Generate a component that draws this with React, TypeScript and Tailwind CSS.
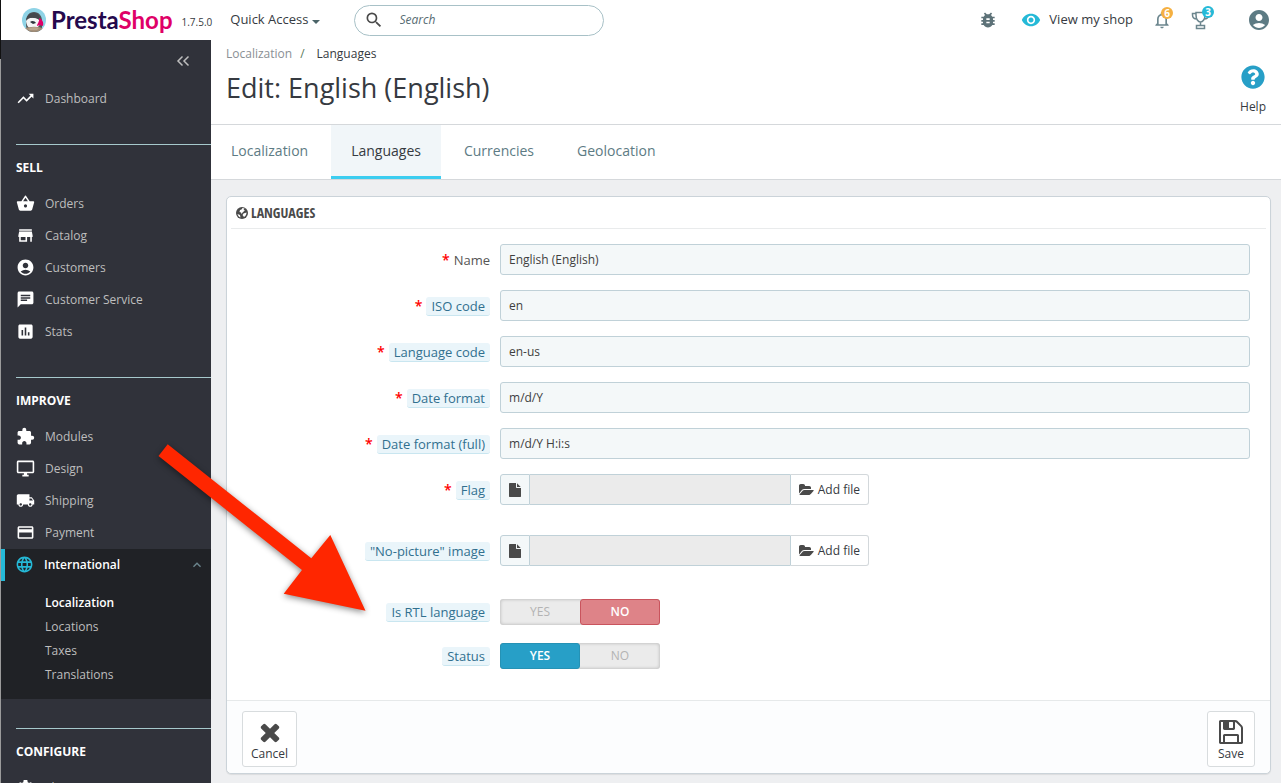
import type { ComponentType, ReactNode } from 'react';
import {
  MdTrendingUp, MdShoppingBasket, MdStore, MdAccountCircle, MdChat, MdAssessment, MdExtension,
  MdLocalShipping, MdCreditCard, MdLanguage, MdSettings, MdBugReport, MdRemoveRedEye,
  MdSearch, MdNotificationsNone, MdKeyboardArrowUp,
} from 'react-icons/md';
import { FaQuestionCircle } from 'react-icons/fa';

function Glyph({ d, box = '0 0 1792 1792', className }: { d: string; box?: string; className?: string }) {
  return (
    <svg viewBox={box} fill="currentColor" className={className} aria-hidden="true">
      <path d={d} />
    </svg>
  );
}

const FILE = 'M1152 512v-472q22 14 36 28l408 408q14 14 28 36h-472zm-128 32q0 40 28 68t68 28h544v1056q0 40-28 68t-68 28h-1344q-40 0-68-28t-28-68v-1600q0-40 28-68t68-28h800v544z';
const FOLDER = 'M1879 952q0 31-31 66l-336 396q-43 51-120.5 86.5t-143.5 35.5h-1088q-34 0-60.5-13t-26.5-43q0-31 31-66l336-396q43-51 120.5-86.5t143.5-35.5h1088q34 0 60.5 13t26.5 43zm-343-344v160h-832q-94 0-197 47.5t-164 119.5l-337 396-5 6q0-4-.5-12.5t-.5-12.5v-960q0-92 66-158t158-66h320q92 0 158 66t66 158v32h544q92 0 158 66t66 158z';
const TIMES = 'M1490 1322q0 40-28 68l-136 136q-28 28-68 28t-68-28l-294-294-294 294q-28 28-68 28t-68-28l-136-136q-28-28-28-68t28-68l294-294-294-294q-28-28-28-68t28-68l136-136q28-28 68-28t68 28l294 294 294-294q28-28 68-28t68 28l136 136q28 28 28 68t-28 68l-294 294 294 294q28 28 28 68z';
const FLOPPY = 'M512 1536h768v-384h-768v384zm896 0h128v-896q0-14-10-38.5t-20-34.5l-281-281q-10-10-34-20t-39-10v416q0 40-28 68t-68 28h-576q-40 0-68-28t-28-68v-416h-128v1280h128v-416q0-40 28-68t68-28h832q40 0 68 28t28 68v416zm-384-928v-320q0-13-9.5-22.5t-22.5-9.5h-192q-13 0-22.5 9.5t-9.5 22.5v320q0 13 9.5 22.5t22.5 9.5h192q13 0 22.5-9.5t9.5-22.5zm640 32v928q0 40-28 68t-68 28h-1344q-40 0-68-28t-28-68v-1344q0-40 28-68t68-28h928q40 0 88 20t76 48l280 280q28 28 48 76t20 88z';
const DESKTOP = 'M21 2H3c-1.100 0-2 .9-2 2v12c0 1.100.9 2 2 2h7v2H8v2h8v-2h-2v-2h7c1.100 0 2-.9 2-2V4c0-1.100-.9-2-2-2zM21 16V4H3v12z';

function DesktopIcon({ className }: { className?: string }) {
  return (
    <svg viewBox="0 0 24 24" fill="currentColor" fillRule="evenodd" className={className} aria-hidden="true">
      <path d={DESKTOP} />
    </svg>
  );
}

function PuffinLogo() {
  return (
    <svg viewBox="0 0 24 24" className="size-6 shrink-0" aria-hidden="true">
      <defs>
        <clipPath id="disc"><circle cx="12" cy="12" r="12" /></clipPath>
      </defs>
      <g clipPath="url(#disc)">
        <rect width="24" height="24" fill="#8fd3e6" />
        <path d="M6 24c-2-3-2-7-2-10 0-6 3-10 8-10s8 4 8 9v11z" fill="#4f5256" />
        <path d="M4 13c2-3 5-4 8-3 4 0 6 2 6 5s-3 5-6 5c-4 1-7 0-8-7z" fill="#f4f5f5" />
        <path d="M4 12c3-3 9-3 14 0 0-4-2-7-6-7-5 0-7 3-8 7z" fill="#45484c" />
        <path d="M8 14c2-2 5-1 6 1l-3 1z" fill="#2f343c" />
        <path d="M17 10c3 1 5 4 4 8-2-1-4-1-6 0 0-2 3-5 2-8z" fill="#df0067" />
        <path d="M2 21c4-3 16-3 20 0v4H2z" fill="#a48f79" />
        <path d="M6 21c4-2 8-2 11-1l-2 2H8z" fill="#b9a58d" />
      </g>
    </svg>
  );
}

function TopBar() {
  return (
    <header className="flex h-10 shrink-0 items-center bg-white pl-[21px] text-[13px] text-[#363a41]">
      <a href="#home" className="flex items-center gap-[5px]">
        <PuffinLogo />
        <span className="font-['Lato',sans-serif] text-[24px] leading-6 font-bold text-[#25094d]">
          Presta<span className="text-[#df0067]">Shop</span>
        </span>
      </a>
      <span className="ml-[9px] pt-1 text-[10px]">1.7.5.0</span>
      <button type="button" className="ml-[18px] flex items-center gap-1">
        Quick Access
        <svg viewBox="0 0 8 4" className="mt-1 h-1 w-2" aria-hidden="true"><path d="M0 0h8L4 4z" fill="#4b6468" /></svg>
      </button>
      <label className="ml-[34px] flex h-[31px] w-[250px] items-center rounded-full border border-[#a8c1c7] pl-[9px]">
        <MdSearch className="size-5 shrink-0 text-[#4a4a4a]" />
        <input type="text" aria-label="Search" placeholder="Search" className="ml-[15px] w-full min-w-0 rounded-full bg-transparent text-[12px] italic outline-none placeholder:text-[#576c72]" />
      </label>
      <div className="ml-auto flex items-center pr-[10px] text-[#6c868e]">
        <button type="button" aria-label="Debug mode"><MdBugReport className="size-5 text-[#5d7278]" /></button>
        <a href="#shop" className="ml-[23px] flex items-center gap-2 text-[13px] text-[#363a41]">
          <MdRemoveRedEye className="size-5 text-[#25b9d7]" />
          View my shop
        </a>
        <button type="button" aria-label="Notifications" className="relative ml-[19px]">
          <MdNotificationsNone className="size-5" />
          <span className="absolute -top-[3px] left-[9px] flex size-3 items-center justify-center rounded-full bg-[#f5b041] text-[10px] leading-3 font-bold text-white">6</span>
        </button>
        <button type="button" aria-label="Achievements" className="relative ml-[19px]">
          <svg viewBox="0 0 20 20" className="size-5" fill="none" stroke="currentColor" strokeWidth="1.500" aria-hidden="true">
            <path d="M5 2.500h9V5c0 4-2 7-4.500 7S5 9 5 5zM5 3.500H1.500V5C1.500 8 3.500 9 6 9M14 3.500h3.500V5c0 3-2 4-4.500 4M9.500 12v3.500M5.500 15.500h8v3h-8z" />
          </svg>
          <span className="absolute -top-[4px] left-[11px] flex size-3 items-center justify-center rounded-full bg-[#25b9d7] text-[10px] leading-3 font-bold text-white">3</span>
        </button>
        <button type="button" aria-label="Account" className="ml-9"><MdAccountCircle className="size-6 text-[#5d7b84]" /></button>
      </div>
    </header>
  );
}

function NavItem({ icon: Icon, label }: { icon: ComponentType<{ className?: string }>; label: string }) {
  return (
    <a href={'#' + label} className="flex h-8 items-center gap-[10px] pl-[15px] text-[#bebebe]">
      <Icon className="mb-px size-[19px] shrink-0 text-white" />
      {label}
    </a>
  );
}

function NavSection({ title, children }: { title: string; children: ReactNode }) {
  return (
    <section className="mt-[29px]">
      <h2 className="ml-[15px] border-t border-[#a6c9cc] pt-[13px] pb-[10px] leading-5 font-bold text-white">{title}</h2>
      {children}
    </section>
  );
}

function SideBar() {
  return (
    <nav className="w-[210px] shrink-0 overflow-hidden bg-[#30323a] text-[12px]">
      <div className="flex h-[43px] items-center justify-end pr-[21px] pb-[2px]">
        <button type="button" aria-label="Collapse menu" className="text-[#bebebe]">
          <svg viewBox="0 0 14 12" className="h-3 w-[14px]" fill="none" stroke="currentColor" strokeWidth="1.500" aria-hidden="true">
            <path d="M6.500 1.500 2 6l4.500 4.500M12.500 1.500 8 6l4.500 4.500" />
          </svg>
        </button>
      </div>
      <NavItem icon={MdTrendingUp} label="Dashboard" />
      <NavSection title="SELL">
        <NavItem icon={MdShoppingBasket} label="Orders" />
        <NavItem icon={MdStore} label="Catalog" />
        <NavItem icon={MdAccountCircle} label="Customers" />
        <NavItem icon={MdChat} label="Customer Service" />
        <NavItem icon={MdAssessment} label="Stats" />
      </NavSection>
      <NavSection title="IMPROVE">
        <NavItem icon={MdExtension} label="Modules" />
        <NavItem icon={DesktopIcon} label="Design" />
        <NavItem icon={MdLocalShipping} label="Shipping" />
        <NavItem icon={MdCreditCard} label="Payment" />
        <div className="bg-[#202226]">
          <a href="#International" className="flex h-8 items-center gap-[10px] border-l-4 border-[#25b9d7] pr-[6px] pl-[10px] font-semibold text-white">
            <MdLanguage className="mb-px size-[19px] shrink-0 text-[#25b9d7]" />
            International
            <MdKeyboardArrowUp className="ml-auto size-4 text-[#6c868e]" />
          </a>
          <ul className="pt-[10px] pb-3 pl-11 leading-6 text-[#bebebe]">
            <li><a href="#localization" className="font-semibold text-white">Localization</a></li>
            <li><a href="#locations">Locations</a></li>
            <li><a href="#taxes">Taxes</a></li>
            <li><a href="#translations">Translations</a></li>
          </ul>
        </div>
      </NavSection>
      <NavSection title="CONFIGURE">
        <NavItem icon={MdSettings} label="Shop Parameters" />
      </NavSection>
    </nav>
  );
}

function FormRow({ label, htmlFor, required, plain, children }: { label: string; htmlFor: string; required?: boolean; plain?: boolean; children: ReactNode }) {
  return (
    <div className="grid grid-cols-[33fr_92fr] items-center">
      <label htmlFor={htmlFor} className="flex items-center justify-end gap-1 pt-px pr-[10px] text-[13px] leading-[18px] text-[#555]">
        {required && <span className="text-[14px] font-semibold text-[#ff0000]">*</span>}
        {plain ? <span>{label}</span> : (
          <span className="rounded-[3px] border-b border-[#c9e6f0] bg-[#eaf5fa] px-[5px] text-[#31708f]">{label}</span>
        )}
      </label>
      {children}
    </div>
  );
}

function TextRow({ label, id, value, plain }: { label: string; id: string; value: string; plain?: boolean }) {
  return (
    <FormRow label={label} htmlFor={id} required plain={plain}>
      <input id={id} type="text" defaultValue={value} className="h-[31px] w-full rounded-[3px] border border-[#c0d1d8] bg-[#f4f8f9] px-2 text-[12px] text-[#3f3f3f] outline-none" />
    </FormRow>
  );
}

function FileRow({ label, id, required }: { label: string; id: string; required?: boolean }) {
  return (
    <FormRow label={label} htmlFor={id} required={required}>
      <div className="flex h-[31px] max-w-[369px] text-[12px]">
        <span className="flex w-[30px] shrink-0 items-center justify-center rounded-l-[3px] border border-[#c0d1d8] bg-[#f4f8f9]">
          <Glyph d={FILE} className="size-[14px] text-[#4a4a4a]" />
        </span>
        <input id={id} type="text" readOnly className="min-w-0 flex-1 border-y border-[#c0d1d8] bg-[#ebebeb] outline-none" />
        <button type="button" className="flex shrink-0 items-center gap-1 rounded-r-[3px] border border-[#d3d8db] border-l-[#c0d1d8] bg-white px-2 text-[#363a41]">
          <Glyph d={FOLDER} box="0 0 1920 1792" className="h-[14px] w-[15px] text-[#4a4a4a]" />
          Add file
        </button>
      </div>
    </FormRow>
  );
}

function SwitchRow({ label, id, on }: { label: string; id: string; on: boolean }) {
  return (
    <FormRow label={label} htmlFor={id}>
      <div role="radiogroup" aria-label={label} className="grid h-[26px] w-40 grid-cols-2 rounded-[3px] bg-[#ebebeb] text-center text-[12px] leading-6 text-[#b3b3b3] shadow-[inset_0_0_3px_1px_rgba(0,0,0,0.16)]">
        <label className="cursor-pointer rounded-[3px] border border-transparent has-checked:border-[#2592b5] has-checked:bg-[#279fc7] has-checked:font-semibold has-checked:text-white">
          <input id={on ? id : id + '-yes'} type="radio" name={id} defaultChecked={on} className="sr-only" />
          YES
        </label>
        <label className="cursor-pointer rounded-[3px] border border-transparent has-checked:border-[#c9545d] has-checked:bg-[#de8388] has-checked:font-semibold has-checked:text-white">
          <input id={on ? id + '-no' : id} type="radio" name={id} defaultChecked={!on} className="sr-only" />
          NO
        </label>
      </div>
    </FormRow>
  );
}

function Panel() {
  return (
    <form className="mt-4 mr-[10px] ml-[15px] rounded-[5px] border border-[#cbd3d9] bg-white shadow-[0_1px_1px_rgba(0,0,0,0.08)]">
      <h3 className="mx-1 flex h-8 items-center gap-[3px] border-b border-[#e9ebec] pl-[5px] font-['Ubuntu_Condensed','Open_Sans_Condensed','Roboto_Condensed','Roboto',sans-serif] text-[14px] text-[#4a4a4a]">
        <svg viewBox="0 0 24 24" className="size-3" aria-hidden="true">
          <circle cx="12" cy="12" r="12" fill="#4a4a4a" />
          <path d="M13 2l4 1-2 3 3 1-4 3-3 4-1-3-3-1 1-4 3-1zM15 13l6-2c0 4-2 7-5 9l-3-4zM3 14l5 2 1 5c-3-1-5-3-6-7z" fill="#fff" />
        </svg>
        LANGUAGES
      </h3>
      <div className="mx-1 flex flex-col gap-[15px] pt-[15px] pr-4 pb-[31px]">
        <TextRow label="Name" id="name" value="English (English)" plain />
        <TextRow label="ISO code" id="iso" value="en" />
        <TextRow label="Language code" id="code" value="en-us" />
        <TextRow label="Date format" id="date" value="m/d/Y" />
        <TextRow label="Date format (full)" id="date-full" value="m/d/Y H:i:s" />
        <FileRow label="Flag" id="flag" required />
        <div className="mt-[15px] mb-[18px]"><FileRow label={'"No-picture" image'} id="no-picture" /></div>
        <SwitchRow label="Is RTL language" id="rtl" on={false} />
        <div className="mt-[3px]"><SwitchRow label="Status" id="status" on /></div>
      </div>
      <footer className="flex justify-between rounded-b-[5px] border-t border-[#e6e9ea] bg-[#fcfdfe] px-[15px] pt-[10px] pb-[6px] text-[12px] leading-4 text-[#363a41]">
        <button type="button" className="flex h-14 flex-col items-center rounded-[3px] border border-[#d8dcde] bg-white px-2 pt-[6px]">
          <Glyph d={TIMES} className="size-7 text-[#4a4a4a]" />
          Cancel
        </button>
        <button type="submit" className="flex h-14 flex-col items-center rounded-[3px] border border-[#d8dcde] bg-white px-[9px] pt-[6px]">
          <Glyph d={FLOPPY} className="size-7 text-[#4a4a4a]" />
          Save
        </button>
      </footer>
    </form>
  );
}

const TABS = ['Localization', 'Languages', 'Currencies', 'Geolocation'];

export default function App() {
  return (
    <div className="relative flex h-screen overflow-hidden bg-[#eeeff1] font-['Open_Sans',sans-serif]">
      <div className="flex w-px shrink-0 flex-col bg-[#9b9b9b]"><div className="h-[59px] bg-[#111]" /></div>
      <div className="flex min-w-0 flex-1 flex-col">
        <TopBar />
        <div className="flex min-h-0 flex-1">
          <SideBar />
          <main className="min-w-0 flex-1 overflow-hidden">
            <div className="flex h-[85px] justify-between border-b border-[#d5d8db] bg-white px-[15px]">
              <div>
                <nav aria-label="Breadcrumb" className="flex gap-2 pt-1 text-[12px] leading-5 text-[#363a41]">
                  <a href="#localization" className="text-[#8a8f94]">Localization</a>
                  <span className="text-[#5b7a5a]">/</span>
                  <span className="pl-1">Languages</span>
                </nav>
                <h1 className="mt-1 text-[27px] leading-10 text-[#363a41]">Edit: English (English)</h1>
              </div>
              <a href="#help" className="flex flex-col items-center pt-[25px] text-[12px] leading-4 text-[#363a41]">
                <FaQuestionCircle className="size-6 text-[#279fc7]" />
                <span className="mt-[10px]">Help</span>
              </a>
            </div>
            <div className="flex h-[55px] gap-[3px] border-b border-[#d5d8db] bg-white text-[14px]">
              {TABS.map((tab) => (
                <a key={tab} href={'#tab-' + tab} className={tab === 'Languages'
                  ? 'flex items-center border-b-[3px] border-[#3ccdf0] bg-[#f1f6f9] px-5 text-[#363a41]'
                  : 'flex items-center border-b-[3px] border-transparent px-5 text-[#5d7b84]'}>{tab}</a>
              ))}
            </div>
            <Panel />
          </main>
        </div>
      </div>
      <svg viewBox="0 0 220 180" className="pointer-events-none absolute top-[440px] left-[150px] h-[180px] w-[220px] drop-shadow-[0_2px_3px_rgba(0,0,0,0.45)]" aria-hidden="true">
        <path d="M17.700 4.300L161.300 118.300L180.300 95L215.500 170.800L133.700 153.700L152 130L8.500 16z" fill="#ff2600" />
      </svg>
    </div>
  );
}
